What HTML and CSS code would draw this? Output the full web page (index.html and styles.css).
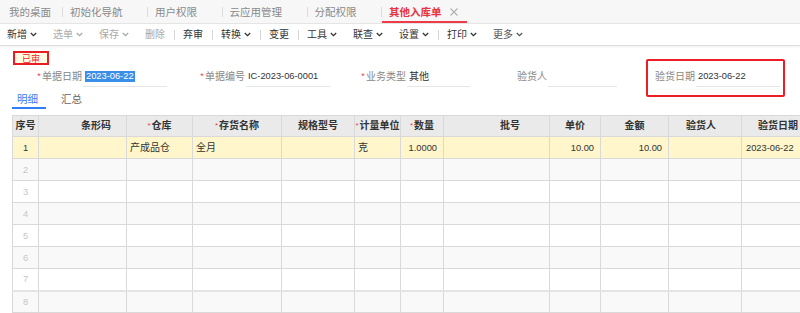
FILE: index.html
```html
<!DOCTYPE html>
<html lang="zh-CN">
<head>
<meta charset="utf-8">
<title>其他入库单</title>
<link rel="stylesheet" href="styles.css">
</head>
<body>
<div class="tabbar">
  <div class="tab tab-first">我的桌面</div>
  <span class="tab-sep"></span>
  <div class="tab">初始化导航</div>
  <span class="tab-sep"></span>
  <div class="tab">用户权限</div>
  <span class="tab-sep"></span>
  <div class="tab">云应用管理</div>
  <span class="tab-sep"></span>
  <div class="tab">分配权限</div>
  <span class="tab-sep"></span>
  <div class="tab tab-active">其他入库单<svg class="tab-close" viewBox="0 0 8 8"><path d="M0.5 0.5L7.5 7.5M7.5 0.5L0.5 7.5"/></svg></div>
</div>

<div class="toolbar">
  <span class="tb">新增<svg class="caret" viewBox="0 0 7 5"><path d="M0.8 1L3.5 3.7L6.2 1"/></svg></span>
  <span class="tb tb-off">选单<svg class="caret" viewBox="0 0 7 5"><path d="M0.8 1L3.5 3.7L6.2 1"/></svg></span>
  <span class="tb tb-off">保存<svg class="caret" viewBox="0 0 7 5"><path d="M0.8 1L3.5 3.7L6.2 1"/></svg></span>
  <span class="tb tb-off">删除</span>
  <span class="tb-sep"></span>
  <span class="tb">弃审</span>
  <span class="tb-sep"></span>
  <span class="tb">转换<svg class="caret" viewBox="0 0 7 5"><path d="M0.8 1L3.5 3.7L6.2 1"/></svg></span>
  <span class="tb-sep"></span>
  <span class="tb">变更</span>
  <span class="tb-sep"></span>
  <span class="tb">工具<svg class="caret" viewBox="0 0 7 5"><path d="M0.8 1L3.5 3.7L6.2 1"/></svg></span>
  <span class="tb">联查<svg class="caret" viewBox="0 0 7 5"><path d="M0.8 1L3.5 3.7L6.2 1"/></svg></span>
  <span class="tb">设置<svg class="caret" viewBox="0 0 7 5"><path d="M0.8 1L3.5 3.7L6.2 1"/></svg></span>
  <span class="tb-sep"></span>
  <span class="tb">打印<svg class="caret" viewBox="0 0 7 5"><path d="M0.8 1L3.5 3.7L6.2 1"/></svg></span>
  <span class="tb tb-more">更多<svg class="caret" viewBox="0 0 7 5"><path d="M0.8 1L3.5 3.7L6.2 1"/></svg></span>
</div>

<div class="stamp"><span>已审</span></div>

<div class="form-row">
  <div class="field f1"><span class="req">*</span><span class="label">单据日期</span><span class="input"><span class="sel lat">2023-06-22</span></span></div>
  <div class="field f2"><span class="req">*</span><span class="label">单据编号</span><span class="input lat">IC-2023-06-0001</span></div>
  <div class="field f3"><span class="req">*</span><span class="label">业务类型</span><span class="input">其他</span></div>
  <div class="field f4"><span class="label">验货人</span><span class="input"></span></div>
  <div class="field f5"><span class="label">验货日期</span><span class="input lat">2023-06-22</span></div>
</div>

<div class="subtabs">
  <span class="subtab on">明细</span>
  <span class="subtab">汇总</span>
</div>

<div class="grid-wrap">
  <table class="grid">
    <colgroup>
      <col style="width:26px"><col style="width:88px"><col style="width:66px"><col style="width:89px">
      <col style="width:73px"><col style="width:46px"><col style="width:43px"><col style="width:106px">
      <col style="width:51px"><col style="width:68px"><col style="width:73px"><col style="width:73px">
    </colgroup>
    <thead>
      <tr>
        <th>序号</th>
        <th class="off">条形码</th>
        <th><i class="req-s">*</i>仓库</th>
        <th><i class="req-s">*</i>存货名称</th>
        <th>规格型号</th>
        <th><i class="req-s">*</i>计量单位</th>
        <th><i class="req-s">*</i>数量</th>
        <th class="off">批号</th>
        <th>单价</th>
        <th>金额</th>
        <th class="off-r">验货人</th>
        <th>验货日期</th>
      </tr>
    </thead>
    <tbody>
      <tr class="cur">
        <td class="no lat">1</td><td></td><td>产成品仓</td><td>全月</td><td></td><td>克</td>
        <td class="num lat">1.0000</td><td></td><td class="num lat">10.00</td><td class="num lat">10.00</td><td></td><td class="lat">2023-06-22</td>
      </tr>
      <tr class="alt"><td class="no lat">2</td><td></td><td></td><td></td><td></td><td></td><td></td><td></td><td></td><td></td><td></td><td></td></tr>
      <tr><td class="no lat">3</td><td></td><td></td><td></td><td></td><td></td><td></td><td></td><td></td><td></td><td></td><td></td></tr>
      <tr class="alt"><td class="no lat">4</td><td></td><td></td><td></td><td></td><td></td><td></td><td></td><td></td><td></td><td></td><td></td></tr>
      <tr><td class="no lat">5</td><td></td><td></td><td></td><td></td><td></td><td></td><td></td><td></td><td></td><td></td><td></td></tr>
      <tr class="alt"><td class="no lat">6</td><td></td><td></td><td></td><td></td><td></td><td></td><td></td><td></td><td></td><td></td><td></td></tr>
      <tr><td class="no lat">7</td><td></td><td></td><td></td><td></td><td></td><td></td><td></td><td></td><td></td><td></td><td></td></tr>
      <tr class="alt fixed"><td class="no lat">8</td><td></td><td></td><td></td><td></td><td></td><td></td><td></td><td></td><td></td><td></td><td></td></tr>
    </tbody>
  </table>
</div>
</body>
</html>
```

FILE: styles.css
```css
* { box-sizing: border-box; margin: 0; padding: 0; }
html, body { width: 800px; height: 313px; overflow: hidden; background: #fff; }
body {
  font-family: "Liberation Sans", "Noto Sans CJK SC", sans-serif;
  font-size: 10px;
  color: #333;
}
.lat { font-size: 9.3px; }

/* top tab bar */
.tabbar {
  display: flex;
  align-items: center;
  height: 24px;
  background: #f7f7f7;
  border-bottom: 1px solid #e6e6e6;
}
.tab {
  height: 23px;
  padding: 1px 24.5px 0 7px;
  line-height: 22px;
  font-size: 10.5px;
  color: #8a8a8a;
  white-space: nowrap;
}
.tab-first { padding-left: 9px; padding-right: 11px; }
.tab-sep { flex: none; width: 1px; height: 10px; background: #dddddd; }
.tab-active {
  display: flex;
  align-items: center;
  padding: 1px 9px 0 7px;
  color: #e8353d;
  font-weight: bold;
  box-shadow: inset 0 -2px 0 #ee3b45;
}
.tab-close {
  width: 8px;
  height: 8px;
  margin-left: 8px;
  stroke: #b0b0b0;
  stroke-width: 1.1;
  fill: none;
}

/* toolbar */
.toolbar {
  display: flex;
  align-items: center;
  height: 22px;
  border-bottom: 1px solid #dedede;
  box-shadow: 0 1px 2px rgba(0, 0, 0, 0.06);
}
.tb {
  display: flex;
  align-items: center;
  padding: 0 8px;
  line-height: 21px;
  color: #333;
  white-space: nowrap;
}
.tb:first-child { padding-left: 7px; }
.tb-off { color: #a9a9a9; }
.tb-more { color: #555; }
.caret {
  width: 7px;
  height: 5px;
  margin-left: 3px;
  fill: none;
  stroke: currentColor;
  stroke-width: 1.3;
}
.tb-sep { flex: none; width: 1px; height: 10px; margin-left: 1px; background: #d6d6d6; }

/* status stamp */
.stamp {
  display: flex;
  align-items: center;
  justify-content: center;
  width: 36px;
  height: 14px;
  margin: 5px 0 0 13px;
  border: 2px solid #ea1c24;
  background: #fffbe3;
  color: #e8262c;
  font-family: "Noto Sans CJK SC", sans-serif;
  font-size: 9px;
}
.stamp span { line-height: 9px; }

/* header form */
.form-row {
  display: flex;
  align-items: flex-start;
  height: 18px;
  margin-top: 4px;
}
.field {
  position: relative;
  display: flex;
  align-items: flex-start;
  line-height: 15px;
  white-space: nowrap;
}
.req { width: 6px; color: #f0424a; font-size: 9px; text-align: center; }
.label { color: #888; margin-right: 1px; }
.input {
  display: block;
  height: 18px;
  padding-left: 2px;
  border-bottom: 1px solid #e6e6e6;
  color: #333;
  overflow: hidden;
}
.sel {
  display: inline-block;
  vertical-align: top;
  margin-top: 2px;
  padding: 0 1px;
  line-height: 11px;
  background: #3a8ee8;
  color: #fff;
}
.f1 { margin-left: 36px; }
.f1 .input { width: 84px; }
.f2 { margin-left: 32px; }
.f2 .input { width: 84px; }
.f3 { margin-left: 30px; }
.f3 .input { width: 63px; }
.f4 { margin-left: 47px; }
.f4 .input { width: 69px; }
.f5 { margin-left: 38px; }
.f5 .input { width: 84px; }
.f5::after {
  content: "";
  position: absolute;
  left: -9px;
  right: -5px;
  top: -10px;
  bottom: -10px;
  border: 2px solid #ee1c24;
  border-radius: 2px;
}

/* sub tabs */
.subtabs { display: flex; margin: 6px 0 0 12px; }
.subtab {
  padding: 0 8px 2px 5px;
  margin-right: 10px;
  font-size: 10.5px;
  line-height: 12px;
  color: #666;
  border-bottom: 2px solid transparent;
}
.subtab.on { color: #2f7ff5; border-bottom-color: #2f7ff5; }

/* grid */
.grid-wrap { margin-top: 6px; padding-left: 12px; width: 820px; }
.grid {
  border-collapse: collapse;
  table-layout: fixed;
  width: 802px;
}
.grid th, .grid td {
  border: 1px solid #d9d9d9;
  overflow: hidden;
  white-space: nowrap;
}
.grid th {
  height: 21px;
  background: #eaeaea;
  font-weight: bold;
  color: #333;
  text-align: center;
  line-height: 12px;
}
.grid th.off { padding-left: 27px; }
.grid th.off-r { padding-right: 8px; }
.req-s {
  font-style: normal;
  font-weight: normal;
  color: #f0424a;
  font-size: 8px;
  vertical-align: top;
  margin-right: 1px;
}
.grid td {
  height: 22px;
  padding: 0 5px 0 3px;
  line-height: 12px;
  background: #fff;
}
.grid tr.alt td { background: #f9f9f9; }
.grid tr.cur td { background: #fff6cb; }
.grid tr.fixed td { border-top: 2px solid #e4e4e4; }
.grid td.no { text-align: center; padding: 0; color: #c6c6c6; }
.grid tr.cur td.no { color: #333; }
.grid td.num { text-align: right; padding-right: 6px; }
.grid td.lat:last-child { padding-left: 4px; }
```
